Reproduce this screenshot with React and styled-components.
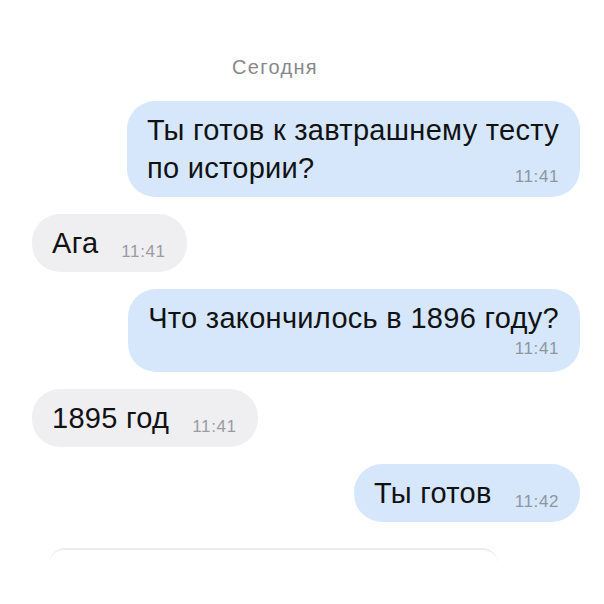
import React from 'react';
import styled, { createGlobalStyle } from 'styled-components';

const GlobalStyle = createGlobalStyle`
  html, body {
    margin: 0;
    background: #ffffff;
  }
  body {
    font-family: "Liberation Sans", Arial, sans-serif;
    color: #111214;
  }
`;

const messages = [
  { id: 1, out: true, lines: ['Ты готов к завтрашнему тесту', 'по истории?'], time: '11:41' },
  { id: 2, out: false, lines: ['Ага'], time: '11:41' },
  { id: 3, out: true, lines: ['Что закончилось в 1896 году?', ''], time: '11:41' },
  { id: 4, out: false, lines: ['1895 год'], time: '11:41' },
  { id: 5, out: true, lines: ['Ты готов'], time: '11:42' },
];

export default function App() {
  return (
    <>
      <GlobalStyle />
      <Page>
        <DateLabel>Сегодня</DateLabel>
        <Feed>
          {messages.map((msg) => {
            const head = msg.lines.slice(0, -1);
            const last = msg.lines[msg.lines.length - 1];
            return (
              <Bubble key={msg.id} $out={msg.out}>
                {head.map((line, i) => (
                  <Line key={i}>{line}</Line>
                ))}
                {last ? (
                  <Row>
                    <Line>{last}</Line>
                    <Time $out={msg.out}>{msg.time}</Time>
                  </Row>
                ) : (
                  <TimeRow>
                    <Time $out={msg.out}>{msg.time}</Time>
                  </TimeRow>
                )}
              </Bubble>
            );
          })}
        </Feed>
        <Composer />
      </Page>
    </>
  );
}

const Page = styled.div`
  width: 604px;
  height: 604px;
  box-sizing: border-box;
  padding: 55px 24px 0 32px;
  display: flex;
  flex-direction: column;
  overflow: hidden;
`;

const DateLabel = styled.div`
  align-self: center;
  margin-right: 62px;
  font-size: 20px;
  line-height: 24px;
  letter-spacing: 1.3px;
  color: #87878a;
  margin-bottom: 22px;
`;

const Feed = styled.div`
  display: flex;
  flex-direction: column;
  gap: 17px;
`;

const Bubble = styled.div`
  align-self: ${(p) => (p.$out ? 'flex-end' : 'flex-start')};
  background: ${(p) => (p.$out ? '#d7e7fb' : '#efeff2')};
  border-radius: 28px;
  padding: 10px 21px 10px 20px;
  display: flex;
  flex-direction: column;
`;

const Line = styled.span`
  font-size: 29px;
  line-height: 38px;
  letter-spacing: 0.3px;
  white-space: nowrap;
`;

const Row = styled.div`
  display: flex;
  align-items: flex-end;
  justify-content: space-between;
  gap: 23px;
`;

const TimeRow = styled.div`
  display: flex;
  justify-content: flex-end;
  height: 25px;
  padding-top: 2px;
  box-sizing: border-box;
`;

const Time = styled.span`
  font-size: 17px;
  line-height: 20px;
  letter-spacing: 0.6px;
  color: ${(p) => (p.$out ? '#8c96a3' : '#9b9ba0')};
  white-space: nowrap;
`;

const Composer = styled.div`
  margin: 26px 0 0 17px;
  width: 449px;
  height: 30px;
  border-top: 2px solid #ececee;
  border-radius: 16px 16px 0 0;
`;
